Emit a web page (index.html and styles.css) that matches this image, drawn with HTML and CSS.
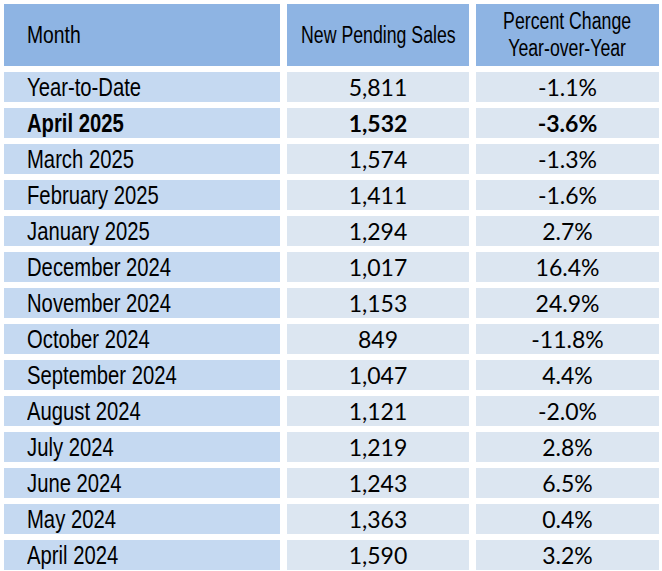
FILE: index.html
```html
<!DOCTYPE html>
<html>
<head>
<meta charset="utf-8">
<link rel="stylesheet" href="styles.css">
</head>
<body>
<div class="table">
  <div class="cell head first"><span class="n">Month</span></div>
  <div class="cell head"><span class="n">New Pending Sales</span></div>
  <div class="cell head"><span class="n">Percent Change<br>Year-over-Year</span></div>

  <div class="cell month"><span class="n">Year-to-Date</span></div><div class="cell num">5,811</div><div class="cell num">-1.1%</div>
  <div class="cell month bold"><span class="n">April 2025</span></div><div class="cell num bold">1,532</div><div class="cell num bold">-3.6%</div>
  <div class="cell month"><span class="n">March 2025</span></div><div class="cell num">1,574</div><div class="cell num">-1.3%</div>
  <div class="cell month"><span class="n">February 2025</span></div><div class="cell num">1,411</div><div class="cell num">-1.6%</div>
  <div class="cell month"><span class="n">January 2025</span></div><div class="cell num">1,294</div><div class="cell num">2.7%</div>
  <div class="cell month"><span class="n">December 2024</span></div><div class="cell num">1,017</div><div class="cell num">16.4%</div>
  <div class="cell month"><span class="n">November 2024</span></div><div class="cell num">1,153</div><div class="cell num">24.9%</div>
  <div class="cell month"><span class="n">October 2024</span></div><div class="cell num">849</div><div class="cell num">-11.8%</div>
  <div class="cell month"><span class="n">September 2024</span></div><div class="cell num">1,047</div><div class="cell num">4.4%</div>
  <div class="cell month"><span class="n">August 2024</span></div><div class="cell num">1,121</div><div class="cell num">-2.0%</div>
  <div class="cell month"><span class="n">July 2024</span></div><div class="cell num">1,219</div><div class="cell num">2.8%</div>
  <div class="cell month"><span class="n">June 2024</span></div><div class="cell num">1,243</div><div class="cell num">6.5%</div>
  <div class="cell month"><span class="n">May 2024</span></div><div class="cell num">1,363</div><div class="cell num">0.4%</div>
  <div class="cell month"><span class="n">April 2024</span></div><div class="cell num">1,590</div><div class="cell num">3.2%</div>
</div>
</body>
</html>
```
FILE: styles.css
```css
html, body {
  margin: 0;
  padding: 0;
  background: #ffffff;
}
body {
  padding: 4px;
}
.table {
  display: grid;
  grid-template-columns: 276px 182px 183px;
  grid-template-rows: 62px;
  grid-auto-rows: 30px;
  column-gap: 7px;
  row-gap: 6px;
}
.cell {
  display: flex;
  align-items: center;
  justify-content: center;
  color: #000;
  white-space: nowrap;
}
.n {
  display: inline-block;
  transform-origin: center center;
}
.head {
  background: #8eb4e3;
  font-family: "Liberation Sans", Arial, sans-serif;
  font-size: 23px;
  text-align: center;
  line-height: 27px;
}
.head .n {
  transform: scaleX(0.77);
}
.head.first {
  justify-content: flex-start;
  padding-left: 23px;
}
.head.first .n {
  transform: scaleX(0.84);
  transform-origin: left center;
}
.month {
  background: #c5d9f1;
  justify-content: flex-start;
  padding-left: 23px;
  font-family: "Liberation Sans", Arial, sans-serif;
  font-size: 25px;
}
.month .n {
  transform: scaleX(0.81);
  transform-origin: left center;
}
.num {
  background: #dce6f1;
  font-family: Lato, "Open Sans", sans-serif;
  font-size: 23px;
}
.bold {
  font-weight: bold;
}
```
